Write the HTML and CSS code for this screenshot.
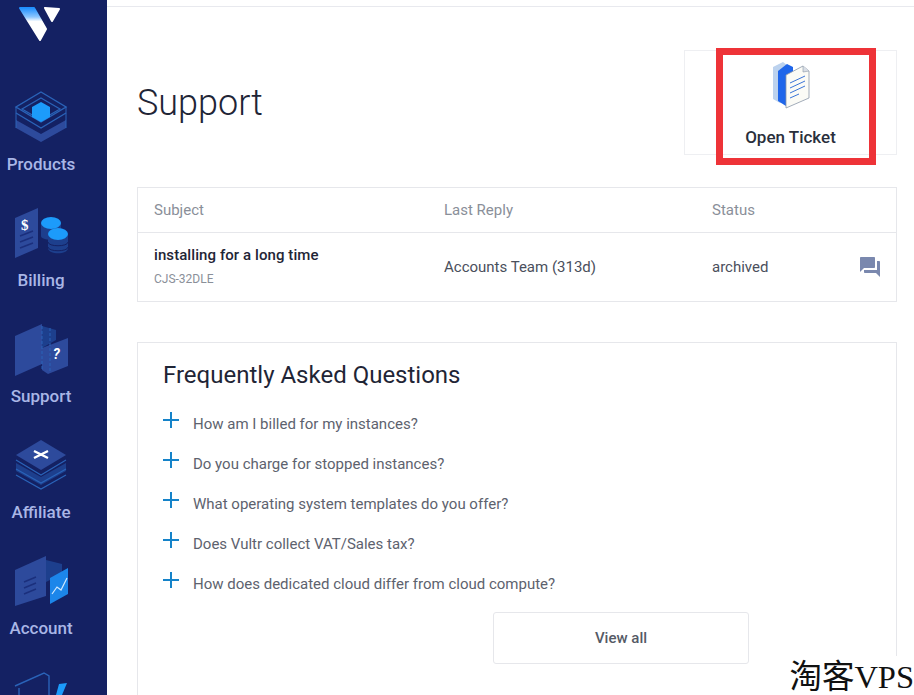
FILE: index.html
```html
<!DOCTYPE html>
<html lang="en">
<head>
    <meta charset="UTF-8">
    <meta name="viewport" content="width=device-width, initial-scale=1.0">
    <title>Support</title>
    <link rel="stylesheet" href="styles.css">
</head>
<body>

    <!-- sidebar -->
    <nav class="sidebar">
        <div class="logo">
            <svg width="44" height="44" viewBox="19 0 44 44">
                <defs>
                    <linearGradient id="logoArm" x1="0" y1="0" x2="0" y2="1">
                        <stop offset="0" stop-color="#1f8fff"/>
                        <stop offset="0.28" stop-color="#8cc6ff"/>
                        <stop offset="0.42" stop-color="#fff"/>
                        <stop offset="1" stop-color="#fff"/>
                    </linearGradient>
                </defs>
                <path d="M20 8H34L46 29L40 40Z" fill="url(#logoArm)" stroke="url(#logoArm)" stroke-width="2" stroke-linejoin="round"/>
                <path d="M45 8L59 9L52 21Z" fill="#fff" stroke="#fff" stroke-width="2" stroke-linejoin="round"/>
            </svg>
        </div>

        <a class="nav-item">
            <svg class="nav-icon" viewBox="0 0 54 56">
                <path d="M2 30L27 44L52 30V38L27 52L2 38Z" fill="#2d4a9c"/>
                <path d="M27 2L52 17L27 32L2 17Z" fill="none" stroke="#2a63b8" stroke-width="1.4"/>
                <path d="M27 8L46 19L27 30L8 19Z" fill="none" stroke="#2a63b8" stroke-width="1.2"/>
                <path d="M2 23L27 38L52 23" fill="none" stroke="#2a63b8" stroke-width="1.4"/>
                <path d="M2 17V38M52 17V38" stroke="#2a63b8" stroke-width="1"/>
                <path d="M27 12L36 17V27L27 32L18 27V17Z" fill="#1c9bfb"/>
            </svg>
            <span>Products</span>
        </a>

        <a class="nav-item">
            <svg class="nav-icon" viewBox="0 0 54 56">
                <path d="M1 12L24 2V42L1 52Z" fill="#2d4a9c"/>
                <path d="M6 30L19 25M6 36L19 31M6 42L19 37" stroke="#1b2f7c" stroke-width="1.5"/>
                <text class="dollar" x="7" y="24">$</text>
                <path d="M27 17V30C27 35 47 35 47 30V17Z" fill="#1d3f8d"/>
                <ellipse cx="37" cy="17" rx="10" ry="6" fill="#1c9bfb"/>
                <path d="M34 28V42C34 49 54 49 54 42V28Z" fill="#1d3f8d"/>
                <path d="M34 36C34 41 54 41 54 36M34 41C34 46 54 46 54 41" fill="none" stroke="#142163" stroke-width="1"/>
                <ellipse cx="44" cy="28" rx="10" ry="6" fill="#1c9bfb"/>
            </svg>
            <span>Billing</span>
        </a>

        <a class="nav-item">
            <svg class="nav-icon" viewBox="0 0 54 56">
                <path d="M1 14L28 2V42L1 54Z" fill="#2d4a9c"/>
                <path d="M28 4L42 8V18L28 26Z" fill="#1d3f8d"/>
                <path d="M28 26L54 16V44L34 52L28 48Z" fill="#2d4a9c"/>
                <path d="M28 4V48M36 6V50" stroke="#2a63b8" stroke-width="1" stroke-dasharray="3 2"/>
                <text class="question" x="39" y="37">?</text>
            </svg>
            <span>Support</span>
        </a>

        <a class="nav-item">
            <svg class="nav-icon" viewBox="0 0 54 56">
                <path d="M2 25V33L27 47L52 33V25L27 39Z" fill="#1d3f8d"/>
                <path d="M2 31L27 45L52 31M2 37L27 51L52 37" fill="none" stroke="#2a63b8" stroke-width="1.2"/>
                <path d="M27 2L52 17L27 32L2 17Z" fill="#2d4a9c"/>
                <path d="M2 22L27 37L52 22" fill="none" stroke="#2a63b8" stroke-width="1.2"/>
                <path d="M20 13L34 20M34 13L20 20" stroke="#fff" stroke-width="2.4"/>
            </svg>
            <span>Affiliate</span>
        </a>

        <a class="nav-item">
            <svg class="nav-icon" viewBox="0 0 54 56">
                <path d="M1 16L32 2V42L1 52Z" fill="#2d4a9c"/>
                <path d="M10 28L22 23M10 34L22 29M10 40L22 35" stroke="#1b2f7c" stroke-width="1.5"/>
                <path d="M32 6L48 10V20L32 28Z" fill="#1d3f8d"/>
                <path d="M36 24L54 14V40L36 50Z" fill="#1c86ea"/>
                <path d="M38 40L43 33L47 36L53 24" fill="none" stroke="#cfe8ff" stroke-width="1.2"/>
            </svg>
            <span>Account</span>
        </a>

        <a class="nav-item nav-item-cut">
            <svg class="nav-icon" viewBox="0 0 54 56">
                <path d="M1 16L30 3L35 6V25M5 18V25" fill="none" stroke="#2a63b8" stroke-width="1.4"/>
                <path d="M45 14L53 13L48 25H42Z" fill="#1c9bfb"/>
            </svg>
        </a>
    </nav>

    <!-- main content -->
    <main class="content">
        <div class="page-head">
            <h1>Support</h1>
            <a class="open-ticket">
                <svg width="38" height="48" viewBox="0 0 38 48">
                    <path d="M1 6L11 1L15 4V38L8 42L1 38Z" fill="#bcd2ee"/>
                    <path d="M6 10L15 3L21 6V40L14 45L6 40Z" fill="#1f66ea"/>
                    <path d="M14 14L31 5L37 10V37L14 47Z" fill="#fbfbf6" stroke="#8a97a8" stroke-width="0.8"/>
                    <path d="M31 5L31 11L37 10" fill="#d9dee6" stroke="#8a97a8" stroke-width="0.6"/>
                    <path d="M18 22L33 15M18 27L33 20M18 32L33 25M18 37L27 33" stroke="#3a74d8" stroke-width="1"/>
                </svg>
                <span>Open Ticket</span>
            </a>
        </div>

        <table class="tickets">
            <thead>
                <tr>
                    <th class="col-subject">Subject</th>
                    <th class="col-reply">Last Reply</th>
                    <th class="col-status">Status</th>
                    <th class="col-action"></th>
                </tr>
            </thead>
            <tbody>
                <tr>
                    <td>
                        <div class="ticket-title">installing for a long time</div>
                        <div class="ticket-id">CJS-32DLE</div>
                    </td>
                    <td>Accounts Team (313d)</td>
                    <td>archived</td>
                    <td class="col-action">
                        <svg width="24" height="24" viewBox="0 0 24 24">
                            <path d="M21 6h-2v9H6v2c0 .55.45 1 1 1h11l4 4V7c0-.55-.45-1-1-1zm-4 6V3c0-.55-.45-1-1-1H3c-.55 0-1 .45-1 1v14l4-4h10c.55 0 1-.45 1-1z" fill="#7a88ae"/>
                        </svg>
                    </td>
                </tr>
            </tbody>
        </table>

        <section class="faq">
            <h2>Frequently Asked Questions</h2>
            <div class="faq-row"><span class="plus"></span><span>How am I billed for my instances?</span></div>
            <div class="faq-row"><span class="plus"></span><span>Do you charge for stopped instances?</span></div>
            <div class="faq-row"><span class="plus"></span><span>What operating system templates do you offer?</span></div>
            <div class="faq-row"><span class="plus"></span><span>Does Vultr collect VAT/Sales tax?</span></div>
            <div class="faq-row"><span class="plus"></span><span>How does dedicated cloud differ from cloud compute?</span></div>
            <a class="view-all">View all</a>
        </section>
    </main>

    <!-- overlays on top of the screenshot -->
    <div class="red-box"></div>
    <div class="watermark">淘客VPS</div>

</body>
</html>
```

FILE: styles.css
```css
html, body {
    height: 100%;
}

body {
    margin: 0;
    padding: 0;
    height: 695px;
    overflow: hidden;
    display: flex;
    position: relative;
    background-color: #fff;
    font-family: Roboto, "Liberation Sans", sans-serif;
    color: #1f2536;
}

/* sidebar */
.sidebar {
    width: 107px;
    flex-shrink: 0;
    height: 695px;
    box-sizing: border-box;
    padding-right: 25px;
    overflow: hidden;
    background-color: #142163;
    display: flex;
    flex-direction: column;
    align-items: center;
}

.logo {
    height: 44px;
    margin-bottom: 46px;
}

.logo svg {
    display: block;
}

.nav-item {
    height: 116px;
    flex-shrink: 0;
    display: flex;
    flex-direction: column;
    align-items: center;
    color: #a9b6e6;
    font-size: 17px;
    font-weight: 500;
}

.nav-item-cut {
    height: 25px;
    overflow: hidden;
}

.nav-icon {
    display: block;
    flex-shrink: 0;
    width: 54px;
    height: 56px;
    margin-bottom: 8px;
}

.nav-item span {
    line-height: 20px;
}

.dollar {
    font: 700 15px "Liberation Serif", serif;
    fill: #fff;
}

.question {
    font: italic 700 14px Roboto, sans-serif;
    fill: #fff;
}

/* main column */
.content {
    flex: 1;
    height: 689px;
    box-sizing: border-box;
    border-top: 1px solid #e8e9ee;
    margin-top: 6px;
    padding: 43px 17px 0 30px;
}

.page-head {
    display: flex;
    justify-content: space-between;
    align-items: center;
    height: 105px;
    margin-bottom: 32px;
}

h1 {
    margin: 0;
    font-size: 36px;
    font-weight: 300;
}

.open-ticket {
    width: 213px;
    height: 105px;
    box-sizing: border-box;
    border: 1px solid #eeeff2;
    display: flex;
    flex-direction: column;
    align-items: center;
    padding-top: 10px;
    font-size: 17px;
    font-weight: 500;
    color: #2a2f3c;
}

.open-ticket svg {
    margin-bottom: 18px;
}

/* ticket table */
.tickets {
    width: 760px;
    border-collapse: collapse;
    border: 1px solid #e6e7eb;
    table-layout: fixed;
    font-size: 15px;
    margin-bottom: 40px;
}

.tickets th {
    height: 44px;
    padding: 0;
    text-align: left;
    font-weight: 400;
    color: #8a8f99;
    border-bottom: 1px solid #e6e7eb;
}

.tickets td {
    height: 68px;
    padding: 0;
    color: #4a4f5c;
}

.tickets th:first-child, .tickets td:first-child {
    padding-left: 16px;
}

.col-subject { width: 290px; }
.col-reply { width: 268px; }
.col-status { width: 130px; }

.col-action svg {
    display: block;
    margin-left: 16px;
}

.ticket-title {
    font-weight: 500;
    color: #1f2536;
    line-height: 20px;
    letter-spacing: 0.08px;
    margin-bottom: 6px;
    margin-top: -3px;
}

.ticket-id {
    font-size: 12px;
    color: #8a8f99;
    line-height: 16px;
}

/* faq, it runs on past the bottom of the window */
.faq {
    border: 1px solid #e6e7eb;
    border-bottom: none;
    height: 353px;
    box-sizing: border-box;
    padding: 16px 25px 0;
}

.faq h2 {
    margin: 0 0 13px;
    font-size: 24px;
    font-weight: 400;
    line-height: 32px;
}

.faq-row {
    height: 40px;
    display: flex;
    align-items: center;
    gap: 14px;
    font-size: 15px;
    color: #5d626e;
}

.plus {
    width: 16px;
    height: 16px;
    flex-shrink: 0;
    position: relative;
    top: -4px;
    background:
        linear-gradient(#1583c9, #1583c9) center / 100% 2px no-repeat,
        linear-gradient(#1583c9, #1583c9) center / 2px 100% no-repeat;
}

.view-all {
    display: flex;
    align-items: center;
    justify-content: center;
    width: 256px;
    height: 52px;
    box-sizing: border-box;
    margin: 8px 0 0 330px;
    border: 1px solid #e6e7eb;
    border-radius: 3px;
    font-size: 15px;
    font-weight: 500;
    color: #555a66;
}

/* red marker and watermark */
.red-box {
    position: absolute;
    left: 716px;
    top: 48px;
    width: 160px;
    height: 117px;
    box-sizing: border-box;
    border: 7px solid #ee3338;
}

.watermark {
    position: absolute;
    right: 0;
    bottom: 0;
    height: 37px;
    padding: 2px 0 0 2px;
    overflow: hidden;
    background-color: #fff;
    font-family: "Liberation Serif", "Noto Sans CJK SC", serif;
    font-size: 32.5px;
    line-height: 39px;
    color: #111;
    white-space: nowrap;
}
```
